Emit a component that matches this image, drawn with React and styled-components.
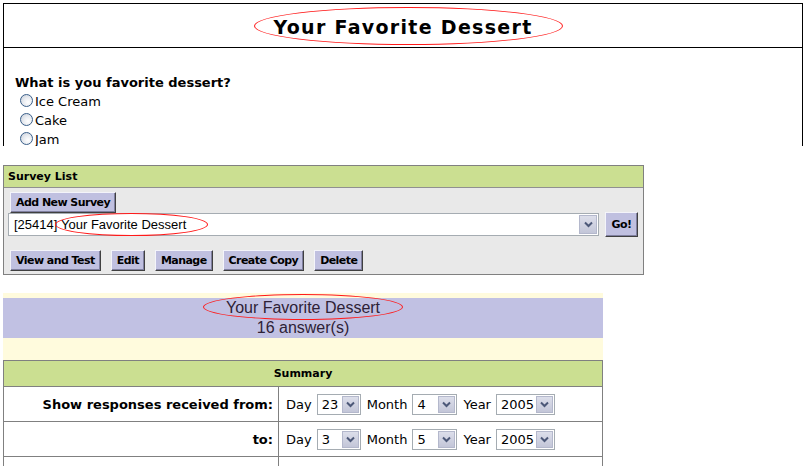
import React from 'react';
import styled, { createGlobalStyle } from 'styled-components';

const GlobalStyle = createGlobalStyle`
    body {
        margin: 0;
        background: #fff;
        font-family: "DejaVu Sans", Verdana, sans-serif;
        color: #000;
    }
`

const Page = styled.div`
    width: 805px;
    height: 466px;
    overflow: hidden;
    padding-top: 3px;
    box-sizing: border-box;
`

// preview of the survey as it appears to the user
const Preview = styled.div`
    margin: 0 2px 0 3px;
    height: 143px;
    overflow: hidden;
    border: 1px solid #000;
    border-bottom: none;
    box-sizing: border-box;
`

const PreviewTitle = styled.div`
    height: 41px;
    border-bottom: 1px solid #000;
    display: flex;
    align-items: center;
    justify-content: center;
    font-size: 19px;
    font-weight: bold;
    letter-spacing: 1.3px;
    padding-top: 2px;
    box-sizing: content-box;
`

const Marked = styled.span`
    position: relative;
    display: inline-block;
`

const Ring = styled.span`
    position: absolute;
    left: ${p => p.$l}px;
    right: ${p => p.$r}px;
    top: ${p => p.$t}px;
    bottom: ${p => p.$b}px;
    border: 1px solid #ff1a1a;
    border-radius: 50%;
    pointer-events: none;
`

const Question = styled.div`
    padding: 27px 0 0 11px;
    font-size: 13px;
    font-weight: bold;
    line-height: 16px;
`

const Options = styled.div`
    padding: 1px 0 0 16px;
`

const Option = styled.label`
    display: flex;
    align-items: center;
    height: 19px;
    font-size: 13px;
    gap: 2px;
`

const Radio = styled.span`
    display: inline-block;
    width: 11px;
    height: 11px;
    border: 1px solid #3a5f8a;
    border-radius: 50%;
    background: radial-gradient(circle at 65% 65%, #fff 0%, #e9ecf1 45%, #c6ccd6 100%);
    margin-bottom: 2px;
`

// survey list panel
const Panel = styled.div`
    margin: 19px 0 0 3px;
    width: 641px;
    border: 1px solid #808080;
    background: #e9e9e9;
    box-sizing: border-box;
`

const PanelHead = styled.div`
    height: 21px;
    background: #cbdf91;
    border-bottom: 1px solid #909090;
    font-size: 11px;
    font-weight: bold;
    line-height: 21px;
    padding-left: 4px;
`

const PanelBody = styled.div`
    padding: 4px 0 3px 0;
`

const Button = styled.button`
    height: 21px;
    padding: 0 5px;
    margin: 0;
    background: #c0c0e0;
    border: 1px solid;
    border-color: #f4f4fa #404040 #404040 #f4f4fa;
    box-shadow: inset -1px -1px 0 #8080a0;
    font-family: "DejaVu Sans", Verdana, sans-serif;
    font-size: 11px;
    font-weight: bold;
    letter-spacing: -0.55px;
    color: #000;
    white-space: nowrap;
`

const AddRow = styled.div`
    display: flex;
    padding-left: 6px;
    height: 21px;
`

const SelectRow = styled.div`
    display: flex;
    align-items: flex-start;
    gap: 6px;
    padding-left: 4px;
`

const BigSelect = styled.div`
    width: 591px;
    height: 23px;
    box-sizing: border-box;
    border: 1px solid #a5acb2;
    background: #fff;
    display: flex;
    align-items: center;
    justify-content: space-between;
    padding: 0 1px 0 5px;
    font-family: "Liberation Sans", Arial, sans-serif;
    font-size: 13px;
`

const ArrowBox = styled.span`
    width: ${p => p.$w || 17}px;
    height: ${p => p.$h || 17}px;
    box-sizing: border-box;
    border: 1px solid #b4b8cc;
    background: linear-gradient(#dcdeea, #c3c6d8);
    display: flex;
    align-items: center;
    justify-content: center;
`

const GoButton = styled(Button)`
    height: 25px;
    width: 33px;
    padding: 0;
    margin-top: -1px;
`

const ActionRow = styled.div`
    display: flex;
    gap: 10px;
    margin-top: 13px;
    padding-left: 6px;
`

// results
const Results = styled.div`
    margin: 18px 0 0 3px;
    width: 600px;
`

const ResultHead = styled.div`
    background: #fffbdd;
    padding: 5px 0 22px;
`

const ResultTitle = styled.div`
    background: #c1c1e3;
    color: #2e2236;
    font-family: "Liberation Sans", Arial, sans-serif;
    font-size: 16px;
    line-height: 20px;
    text-align: center;
`

const Table = styled.table`
    width: 600px;
    border-collapse: collapse;
    border: 1px solid #808080;
`

const HeadCell = styled.th`
    background: #cbdf91;
    height: 25px;
    padding: 0;
    font-size: 11px;
    font-weight: bold;
    text-align: center;
    border-bottom: 1px solid #808080;
`

const LabelCell = styled.td`
    width: 269px;
    height: 34px;
    padding: 0 5px 0 0;
    text-align: right;
    font-size: 13px;
    font-weight: bold;
    border-right: 1px solid #808080;
    border-bottom: 1px solid #808080;
`

const FieldCell = styled.td`
    height: 34px;
    padding: 0 0 0 7px;
    border-bottom: 1px solid #808080;
`

const DateFields = styled.div`
    display: flex;
    align-items: center;
    gap: 5px;
    font-size: 13px;
`

const FieldLabel = styled.span`
    margin-left: ${p => (p.$first ? 0 : 1)}px;
`

const SmallSelect = styled.div`
    width: ${p => p.$w}px;
    height: 21px;
    box-sizing: border-box;
    border: 1px solid #a5acb2;
    background: #fff;
    display: flex;
    align-items: center;
    justify-content: space-between;
    padding: 0 1px 0 4px;
`

const Chevron = () => (
    <svg width="9" height="7" viewBox="0 0 9 7">
        <path d="M1 1.5 L4.5 5 L8 1.5" fill="none" stroke="#4c5878" strokeWidth="2" />
    </svg>
)

const Pick = ({ value, w }) => (
    <SmallSelect $w={w}>
        <span>{value}</span>
        <ArrowBox $w={17} $h={17}><Chevron /></ArrowBox>
    </SmallSelect>
)

const DateRow = ({ label, day, month, year }) => (
    <tr>
        <LabelCell>{label}</LabelCell>
        <FieldCell>
            <DateFields>
                <FieldLabel $first>Day</FieldLabel>
                <Pick value={day} w={44} />
                <FieldLabel>Month</FieldLabel>
                <Pick value={month} w={45} />
                <FieldLabel>Year</FieldLabel>
                <Pick value={year} w={59} />
            </DateFields>
        </FieldCell>
    </tr>
)

export default function App() {
    return (
        <Page>
            <GlobalStyle />
            <Preview>
                <PreviewTitle>
                    <Marked>
                        Your Favorite Dessert
                        <Ring $l={-19} $r={-30} $t={-9} $b={-7} />
                    </Marked>
                </PreviewTitle>
                <Question>What is you favorite dessert?</Question>
                <Options>
                    <Option><Radio />Ice Cream</Option>
                    <Option><Radio />Cake</Option>
                    <Option><Radio />Jam</Option>
                </Options>
            </Preview>

            <Panel>
                <PanelHead>Survey List</PanelHead>
                <PanelBody>
                    <AddRow><Button>Add New Survey</Button></AddRow>
                    <SelectRow>
                        <BigSelect>
                            <span>
                                [25414]{' '}
                                <Marked>
                                    Your Favorite Dessert
                                    <Ring $l={-6} $r={-22} $t={-4} $b={-4} />
                                </Marked>
                            </span>
                            <ArrowBox $w={18} $h={19}><Chevron /></ArrowBox>
                        </BigSelect>
                        <GoButton>Go!</GoButton>
                    </SelectRow>
                    <ActionRow>
                        <Button>View and Test</Button>
                        <Button>Edit</Button>
                        <Button>Manage</Button>
                        <Button>Create Copy</Button>
                        <Button>Delete</Button>
                    </ActionRow>
                </PanelBody>
            </Panel>

            <Results>
                <ResultHead>
                    <ResultTitle>
                        <Marked>
                            Your Favorite Dessert
                            <Ring $l={-23} $r={-23} $t={-4} $b={-2} />
                        </Marked>
                        <div>16 answer(s)</div>
                    </ResultTitle>
                </ResultHead>
                <Table>
                    <tbody>
                        <tr><HeadCell colSpan={2}>Summary</HeadCell></tr>
                        <DateRow label="Show responses received from:" day="23" month="4" year="2005" />
                        <DateRow label="to:" day="3" month="5" year="2005" />
                        <tr><LabelCell /><FieldCell /></tr>
                    </tbody>
                </Table>
            </Results>
        </Page>
    )
}
